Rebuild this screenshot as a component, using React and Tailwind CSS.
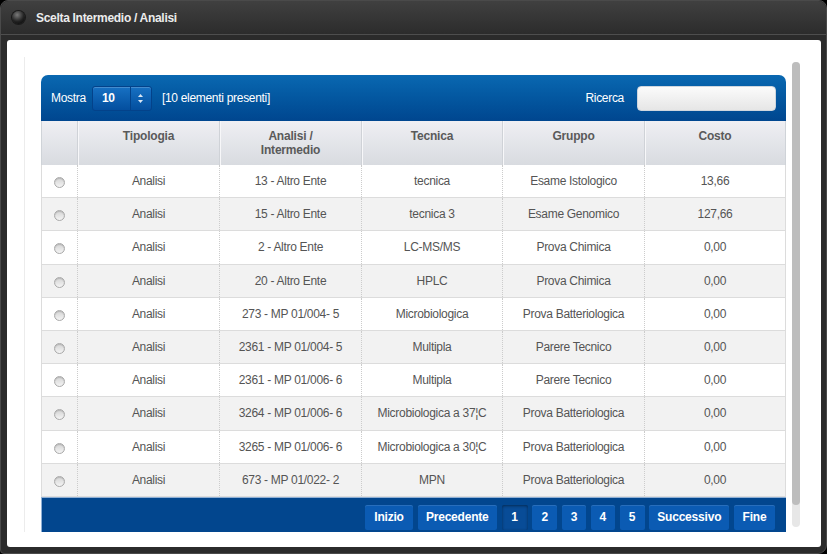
import React from "react";

const rows = [
  ["Analisi", "13 - Altro Ente", "tecnica", "Esame Istologico", "13,66"],
  ["Analisi", "15 - Altro Ente", "tecnica 3", "Esame Genomico", "127,66"],
  ["Analisi", "2 - Altro Ente", "LC-MS/MS", "Prova Chimica", "0,00"],
  ["Analisi", "20 - Altro Ente", "HPLC", "Prova Chimica", "0,00"],
  ["Analisi", "273 - MP 01/004- 5", "Microbiologica", "Prova Batteriologica", "0,00"],
  ["Analisi", "2361 - MP 01/004- 5", "Multipla", "Parere Tecnico", "0,00"],
  ["Analisi", "2361 - MP 01/006- 6", "Multipla", "Parere Tecnico", "0,00"],
  ["Analisi", "3264 - MP 01/006- 6", "Microbiologica a 37¦C", "Prova Batteriologica", "0,00"],
  ["Analisi", "3265 - MP 01/006- 6", "Microbiologica a 30¦C", "Prova Batteriologica", "0,00"],
  ["Analisi", "673 - MP 01/022- 2", "MPN", "Prova Batteriologica", "0,00"],
];

const widths = ["w-[35px]", "w-[142px]", "w-[142px]", "w-[141px]", "w-[142px]", "w-[141px]"];

function Btn({ children, w, active }) {
  return (
    <div
      className={`${w} h-[25px] flex items-center justify-center rounded-[2px] text-white font-bold text-[12px] tracking-[-0.2px] ${
        active
          ? "bg-[#084c97] shadow-[inset_0_1px_3px_rgba(0,0,0,0.45)]"
          : "bg-[#0b5bb3] shadow-[inset_0_1px_0_rgba(255,255,255,0.12)]"
      }`}
    >
      {children}
    </div>
  );
}

export default function App() {
  return (
    <div
      className="w-[827px] h-[554px] bg-black overflow-hidden"
      style={{ fontFamily: '"Liberation Sans", Arial, sans-serif' }}
    >
      <div className="w-full h-full bg-[#2b2b2b] rounded-tl-[8px] rounded-tr-[8px] rounded-br-[9px] rounded-bl-[4px] border border-[#4a4a4a] flex flex-col">
        {/* Title bar */}
        <div className="h-[34px] shrink-0 flex items-center pl-[11px] bg-gradient-to-b from-[#404040] to-[#2c2c2c] rounded-t-[8px] border-b border-[#4e4e4e]">
          <div className="w-[13px] h-[13px] rounded-full bg-[radial-gradient(circle_at_40%_30%,#7a7a7a_0%,#222_55%,#000_100%)] shadow-[0_0_0_1px_#1a1a1a]" />
          <div className="ml-[11px] text-[12px] font-bold text-[#ececec] tracking-[-0.3px]">
            Scelta Intermedio / Analisi
          </div>
        </div>

        {/* Content panel */}
        <div className="ml-[6px] mr-[5px] mt-[5px] h-[507px] bg-white rounded-[3px] flex items-start">
          <div className="ml-[17px] mt-[17px] border-l border-[#ececec] pl-[16px] pt-[18px] w-[762px] h-[475px]">
            <div className="w-[745px]">
              {/* Blue header */}
              <div className="h-[46px] rounded-t-[7px] bg-gradient-to-b from-[#0a68b1] to-[#00468f] flex items-center pl-[10px] pr-[10px] text-white text-[12px] tracking-[-0.3px]">
                <span>Mostra</span>
                <div className="ml-[6px] w-[60px] h-[25px] rounded-[3px] bg-gradient-to-b from-[#1771c3] to-[#044e9e] border border-[#03428a] flex shadow-[inset_0_1px_0_rgba(255,255,255,0.2)]">
                  <div className="w-[37px] h-full flex items-center pl-[9px] font-bold text-[12px]">10</div>
                  <div className="flex-1 border-l border-[#03428a] flex items-center justify-center">
                    <svg width="7" height="11" viewBox="0 0 7 11">
                      <path d="M3.5 1 L6 4 H1 Z" fill="#dce8f5" />
                      <path d="M3.5 10 L6 7 H1 Z" fill="#dce8f5" />
                    </svg>
                  </div>
                </div>
                <span className="ml-[10px]">[10 elementi presenti]</span>
                <span className="ml-auto">Ricerca</span>
                <div className="ml-[13px] w-[139px] h-[25px] rounded-[4px] bg-gradient-to-b from-[#fbfbfb] to-[#e6e6e6] border border-[#cfd6de]" />
              </div>

              {/* Column headers */}
              <div className="flex h-[44px] bg-gradient-to-b from-[#efeff3] to-[#d8dbe0] border-l border-r border-[#cfd3d8]">
                {["", "Tipologia", "Analisi /\nIntermedio", "Tecnica", "Gruppo", "Costo"].map((h, i) => (
                  <div
                    key={i}
                    className={`${widths[i]} ${i > 0 ? "border-l border-[#cfd2d7] shadow-[inset_1px_0_0_#f7f7f9]" : ""} pt-[8px] text-center text-[12px] leading-[14px] font-bold text-[#5a5a5a] tracking-[-0.2px] whitespace-pre-line`}
                  >
                    {h}
                  </div>
                ))}
              </div>

              {/* Rows */}
              {rows.map((r, ri) => (
                <div
                  key={ri}
                  className={`flex h-[33.2px] border-b border-l border-r border-[#dcdcdc] ${ri % 2 === 1 ? "bg-[#f2f2f2]" : "bg-white"}`}
                >
                  <div className="w-[35px] flex items-center justify-center">
                    <div className="w-[11px] h-[11px] mt-[3px] rounded-full border border-[#a9a9a9] bg-gradient-to-b from-[#d4d4d4] to-[#f4f4f4] shadow-[inset_0_1px_1px_rgba(0,0,0,0.15)]" />
                  </div>
                  {r.map((c, ci) => (
                    <div
                      key={ci}
                      className={`${widths[ci + 1]} border-l border-dotted border-[#cccccc] flex items-center justify-center text-[12px] tracking-[-0.3px] text-[#555]`}
                    >
                      {c}
                    </div>
                  ))}
                </div>
              ))}

              {/* Footer */}
              <div className="h-[35px] bg-[#02468e] border-t border-l border-[#8fb0d6] flex items-end justify-end pr-[11px] pb-[2px]">
                <div className="flex items-center gap-[4.75px]">
                  <Btn w="w-[48px]">Inizio</Btn>
                  <Btn w="w-[79px]">Precedente</Btn>
                  <Btn w="w-[26px]" active>1</Btn>
                  <Btn w="w-[25px]">2</Btn>
                  <Btn w="w-[24px]">3</Btn>
                  <Btn w="w-[24px]">4</Btn>
                  <Btn w="w-[25px]">5</Btn>
                  <Btn w="w-[80px]">Successivo</Btn>
                  <Btn w="w-[41px]">Fine</Btn>
                </div>
              </div>
            </div>
          </div>

          {/* Scrollbar */}
          <div className="ml-[6px] mt-[22px] w-[8px] h-[465px] rounded-[4px] bg-[#e7e7e7]">
            <div className="w-[8px] h-[443px] rounded-[4px] bg-[#bdbdbd]" />
          </div>
        </div>
      </div>
    </div>
  );
}
